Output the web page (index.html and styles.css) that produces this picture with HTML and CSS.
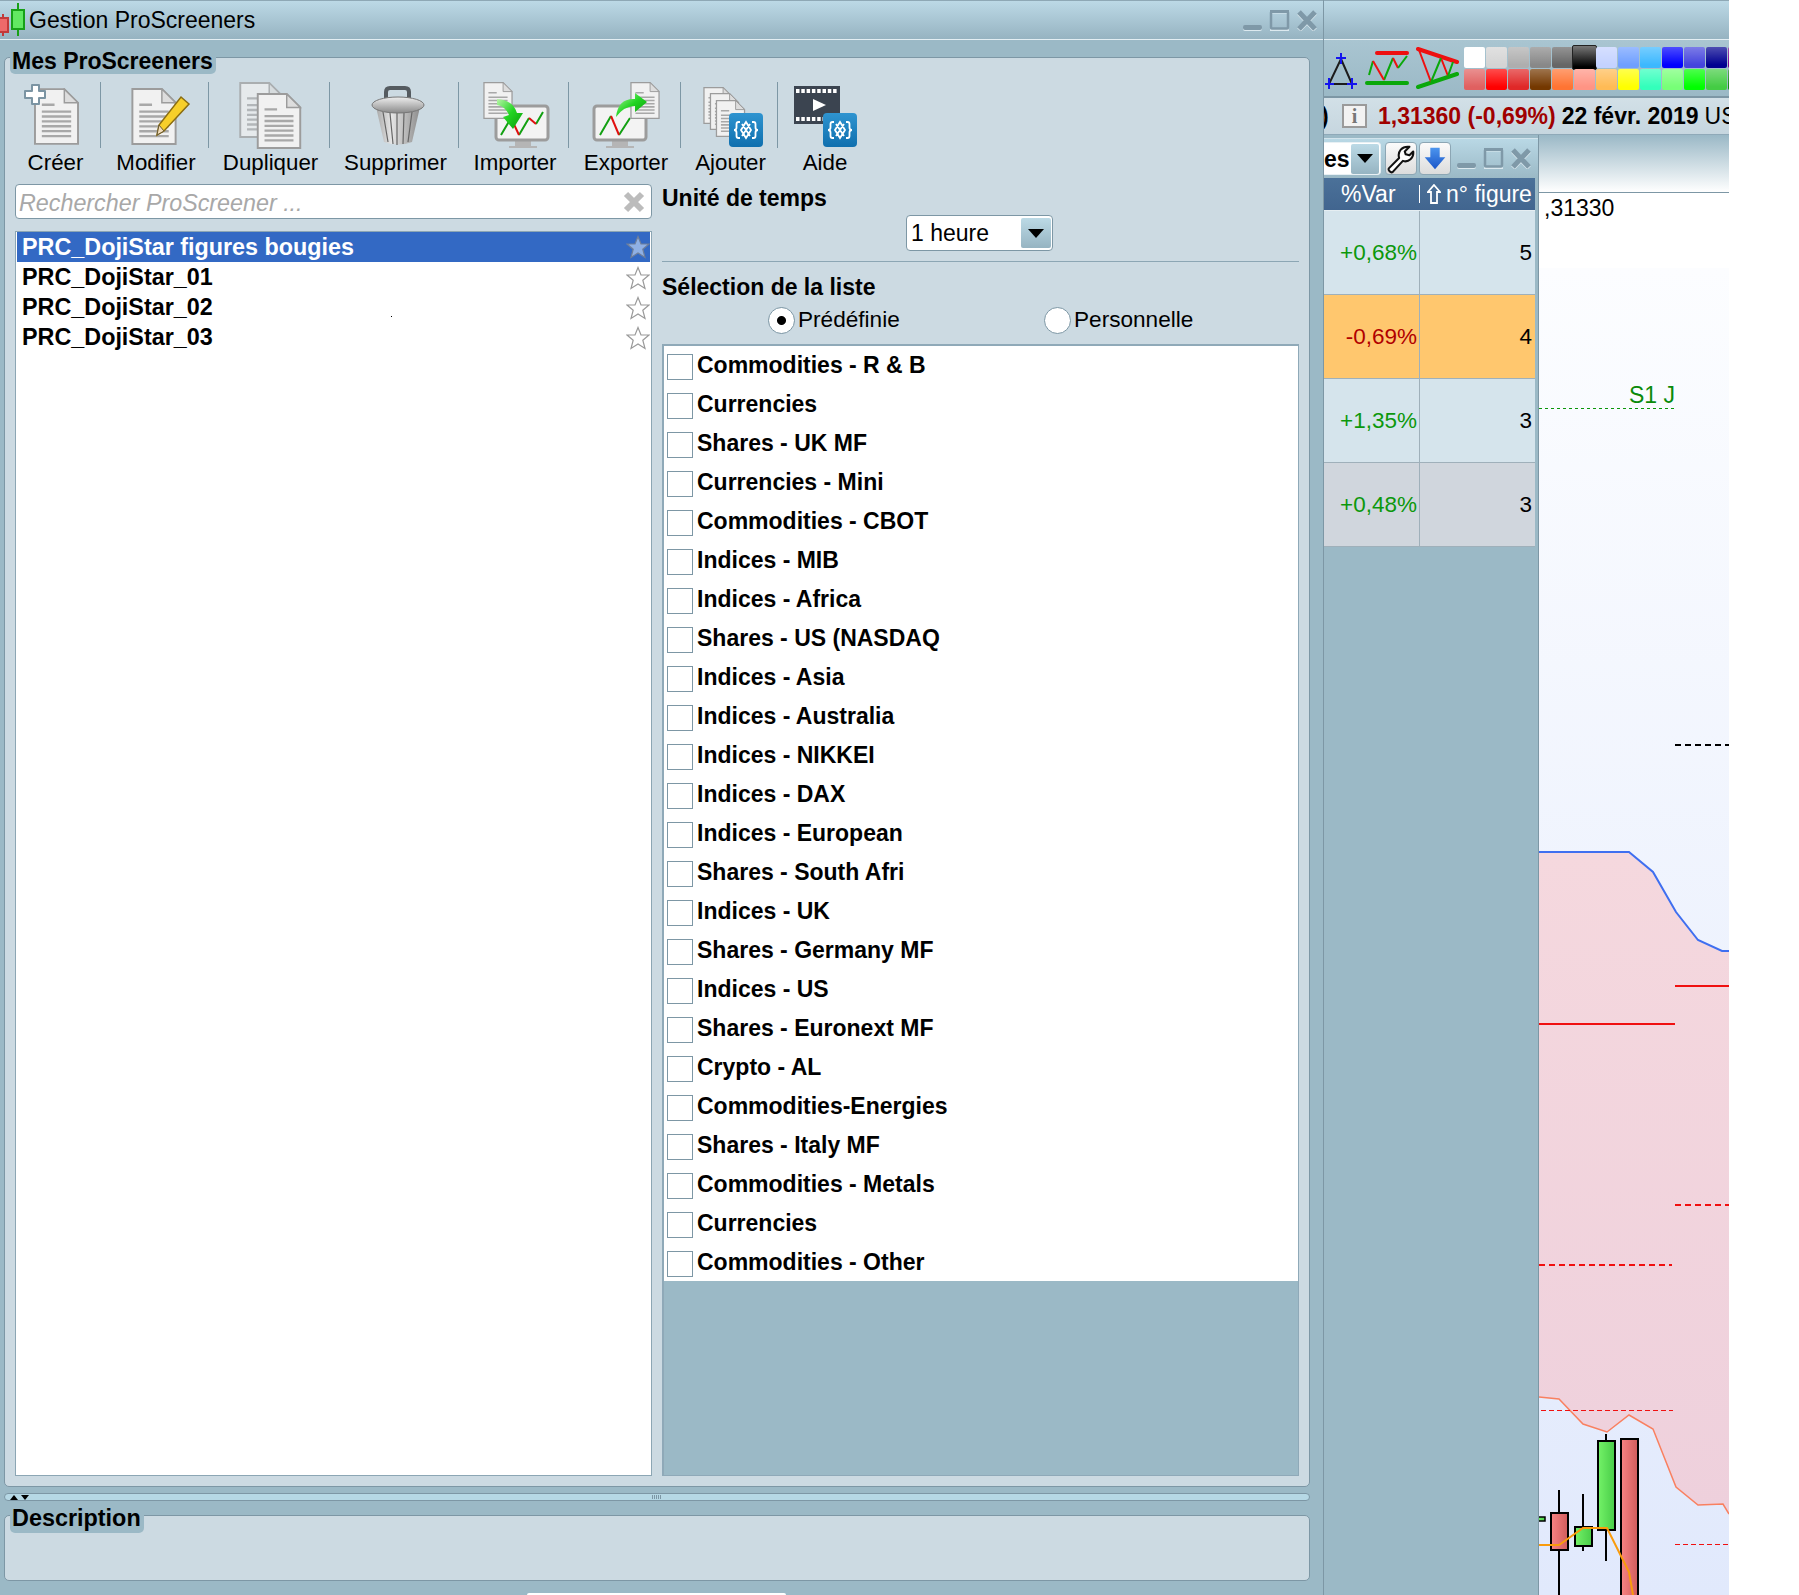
FILE: index.html
```html
<!DOCTYPE html>
<html lang="fr">
<head>
<meta charset="utf-8">
<title>Gestion ProScreeners</title>
<link rel="stylesheet" href="styles.css">
</head>
<body>
<svg class="defs" aria-hidden="true">
  <defs>
    <linearGradient id="badgeGrad" x1="0" y1="0" x2="0" y2="1"><stop offset="0" stop-color="#2f94d0"/><stop offset="1" stop-color="#0f6fae"/></linearGradient>
    <linearGradient id="arrowGrad" x1="0" y1="0" x2="1" y2="1"><stop offset="0" stop-color="#b8f5a8"/><stop offset=".5" stop-color="#22d422"/><stop offset="1" stop-color="#0a9a0a"/></linearGradient>
    <linearGradient id="metalGrad" x1="0" y1="0" x2="1" y2="0"><stop offset="0" stop-color="#a8a8a8"/><stop offset=".35" stop-color="#e6e6e6"/><stop offset="1" stop-color="#8c8c8c"/></linearGradient>
    <linearGradient id="lidGrad" x1="0" y1="0" x2="0" y2="1"><stop offset="0" stop-color="#eeeeee"/><stop offset="1" stop-color="#8a8a8a"/></linearGradient>
    <linearGradient id="blueDown" x1="0" y1="0" x2="0" y2="1"><stop offset="0" stop-color="#4c95ee"/><stop offset="1" stop-color="#1a55c8"/></linearGradient>
    <linearGradient id="chartBg" x1="0" y1="0" x2="0" y2="1"><stop offset="0" stop-color="#fcfdff"/><stop offset="1" stop-color="#e1e9fc"/></linearGradient>
    <linearGradient id="pinkBg" x1="0" y1="0" x2="0" y2="1"><stop offset="0" stop-color="#f5d8de"/><stop offset="1" stop-color="#eed0dc"/></linearGradient>
    <linearGradient id="redCandle" x1="0" y1="0" x2="1" y2="0"><stop offset="0" stop-color="#f88484"/><stop offset="1" stop-color="#d05c5c"/></linearGradient>
    <linearGradient id="greenCandle" x1="0" y1="0" x2="1" y2="0"><stop offset="0" stop-color="#74f268"/><stop offset="1" stop-color="#48cc48"/></linearGradient>
    <symbol id="doc" viewBox="0 0 46 58">
      <path d="M1 1h30l14 14v42H1z" fill="#f1f1f1" stroke="#9c9c9c" stroke-width="2"/>
      <path d="M31 1v14h14z" fill="#dddddd" stroke="#9c9c9c" stroke-width="1.5"/>
      <path d="M8 17h13M8 24h30M8 29h30M8 34h30M8 39h30M8 44h30M8 49h30" stroke="#a8a8a8" stroke-width="2.4"/>
    </symbol>
    <symbol id="badge" viewBox="0 0 34 34">
      <rect width="34" height="34" rx="4" fill="url(#badgeGrad)"/>
      <path d="M11 9H9.500Q7.500 9 7.500 11V14.500Q7.500 17 5 17Q7.500 17 7.500 19.500V23Q7.500 25 9.500 25H11M23 9H24.500Q26.500 9 26.500 11V14.500Q26.500 17 29 17Q26.500 17 26.500 19.500V23Q26.500 25 24.500 25H23M13 11L21 23M21 11L13 23M17 9L22 17L17 25L12 17Z" fill="none" stroke="#fff" stroke-width="1.800"/>
    </symbol>
    <symbol id="winctl" viewBox="0 0 75 21">
      <rect x="0" y="16" width="19" height="5" rx="2" fill="#dce9ef"/>
      <rect x="0" y="15" width="19" height="5" rx="2" fill="#7f99a8"/>
      <rect x="28" y="2.500" width="17" height="17.500" fill="none" stroke="#dce9ef" stroke-width="2"/>
      <rect x="28" y="1.500" width="17" height="17" rx="1" fill="none" stroke="#7f99a8" stroke-width="2.500"/>
      <path d="M27 1.500H46" stroke="#7f99a8" stroke-width="3"/>
      <path d="M56 3L72 20M72 3L56 20" stroke="#dce9ef" stroke-width="5"/>
      <path d="M56 2L72 19M72 2L56 19" stroke="#7f99a8" stroke-width="5"/>
    </symbol>
    <symbol id="star" viewBox="0 0 24 24">
      <path d="M12 1.500L15 9H23L16.800 14.200L19 22.500L12 18L5 22.500L7.200 14.200L1 9H9Z"/>
    </symbol>
  </defs>
</svg>

<div class="screen">
  <section class="dialog">
    <header class="titlebar">
      <svg class="app-icon" viewBox="0 0 28 39" width="28" height="39">
        <path d="M3 14V36" stroke="#c23a3a" stroke-width="2"/>
        <rect x="-3" y="18" width="11" height="14" fill="#ee6a6a" stroke="#c23a3a" stroke-width="2"/>
        <path d="M18 3V36" stroke="#17a017" stroke-width="2"/>
        <rect x="12" y="10" width="12" height="19" fill="#62e862" stroke="#17a017" stroke-width="2"/>
      </svg>
      <span class="title-text">Gestion ProScreeners</span>
      <svg class="winctl"><use href="#winctl"/></svg>
    </header>

    <div class="group main-group">
      <div class="legend">Mes ProScreeners</div>
      <div class="toolbar">
        <div class="tool">
          <svg class="tool-icon" viewBox="15 82 80 66"><use href="#doc" x="33" y="88" width="45" height="57"/><path d="M31 85h7v6h6v7h-6v6h-7v-6h-7v-7h7z" fill="#fff" stroke="#7b94a3" stroke-width="2" stroke-linejoin="round"/></svg>
          <span>Créer</span>
        </div>
        <i class="tool-sep"></i>
        <div class="tool">
          <svg class="tool-icon" viewBox="116 82 80 66"><use href="#doc" x="131" y="88" width="46" height="57"/><path d="M181 97L189 104L164 131L157 135L159 125Z" fill="#f7cf2a" stroke="#8a6d12" stroke-width="1.500"/><path d="M159 125L164 131L157 135Z" fill="#f2dcb8" stroke="#6a5a30"/></svg>
          <span>Modifier</span>
        </div>
        <i class="tool-sep"></i>
        <div class="tool">
          <svg class="tool-icon" viewBox="231 82 80 66"><use class="back-doc" href="#doc" x="239" y="82" width="45" height="56"/><use href="#doc" x="256" y="93" width="46" height="56"/></svg>
          <span>Dupliquer</span>
        </div>
        <i class="tool-sep"></i>
        <div class="tool">
          <svg class="tool-icon" viewBox="355 82 80 66"><path d="M385 100V92Q385 88 389 88H404Q408 88 408 92V100" fill="none" stroke="#555b60" stroke-width="4"/><path d="M375 107L383 142Q397 147 411 142L419 107Z" fill="url(#metalGrad)"/><path d="M382 112L387 142M389 113L392 144M396 113V145M403 113L402 144M411 112L407 142" stroke="#666" stroke-width="1.200"/><ellipse cx="397" cy="105" rx="26" ry="8" fill="url(#lidGrad)" stroke="#777"/></svg>
          <span>Supprimer</span>
        </div>
        <i class="tool-sep"></i>
        <div class="tool">
          <svg class="tool-icon" viewBox="475 82 80 66"><path d="M515 140h16v6h6v2h-28v-2h6z" fill="#b5b5b5"/><rect x="496" y="106" width="52" height="34" rx="3" fill="#f3f3f3" stroke="#9c9c9c" stroke-width="3"/><path d="M501 135L511 118M519 135L529 118M536 124L543 112" stroke="#12a012" stroke-width="2" fill="none"/><path d="M511 118L519 135M529 118L536 124" stroke="#e01010" stroke-width="2" fill="none"/><use href="#doc" x="482" y="82" width="32" height="37"/><path d="M497 99Q513 100 517 113H523L513 129L503 117L509 115Q505 106 497 105Z" fill="url(#arrowGrad)"/></svg>
          <span>Importer</span>
        </div>
        <i class="tool-sep"></i>
        <div class="tool">
          <svg class="tool-icon" viewBox="586 82 80 66"><path d="M612 140h16v6h6v2h-28v-2h6z" fill="#b5b5b5"/><rect x="594" y="106" width="52" height="34" rx="3" fill="#f3f3f3" stroke="#9c9c9c" stroke-width="3"/><path d="M600 135L611 116M619 135L630 118" stroke="#12a012" stroke-width="2" fill="none"/><path d="M611 116L619 135" stroke="#e01010" stroke-width="2" fill="none"/><use href="#doc" x="629" y="82" width="32" height="37"/><path d="M616 117Q618 98 635 99V93L647 102L635 112V106Q624 106 616 117Z" fill="url(#arrowGrad)"/></svg>
          <span>Exporter</span>
        </div>
        <i class="tool-sep"></i>
        <div class="tool">
          <svg class="tool-icon" viewBox="690 82 80 66"><use href="#doc" x="702" y="87" width="30" height="37"/><use href="#doc" x="708" y="93" width="31" height="37"/><use href="#doc" x="714" y="100" width="31" height="37"/><use href="#badge" x="728" y="113" width="34" height="34"/></svg>
          <span>Ajouter</span>
        </div>
        <i class="tool-sep"></i>
        <div class="tool">
          <svg class="tool-icon" viewBox="785 82 80 66"><rect x="794" y="86" width="46" height="38" fill="#3b4450"/><path d="M796 91H838M796 119H838" stroke="#fff" stroke-width="4" stroke-dasharray="3.500 1.800" fill="none"/><path d="M813 99L826 105L813 111Z" fill="#fff"/><use href="#badge" x="823" y="113" width="34" height="34"/></svg>
          <span>Aide</span>
        </div>
      </div>

      <div class="columns">
        <div class="left-col">
          <div class="search">
            <span class="search-text">Rechercher ProScreener ...</span>
            <svg class="search-clear" viewBox="0 0 22 22"><path d="M3 3L19 19M19 3L3 19" stroke="#bcbcbc" stroke-width="6"/></svg>
          </div>
          <div class="screeners">
            <div class="screener selected"><span>PRC_DojiStar figures bougies</span><svg class="star"><use href="#star"/></svg></div>
            <div class="screener"><span>PRC_DojiStar_01</span><svg class="star"><use href="#star"/></svg></div>
            <div class="screener"><span>PRC_DojiStar_02</span><svg class="star"><use href="#star"/></svg><i class="speck"></i></div>
            <div class="screener"><span>PRC_DojiStar_03</span><svg class="star"><use href="#star"/></svg></div>
          </div>
        </div>

        <div class="right-col">
          <div class="field-label first">Unité de temps</div>
          <div class="combo">
            <span>1 heure</span>
            <span class="combo-btn"><i class="caret"></i></span>
          </div>
          <div class="rule"></div>
          <div class="field-label second">Sélection de la liste</div>
          <div class="radios">
            <label class="radio checked">Prédéfinie</label>
            <label class="radio">Personnelle</label>
          </div>
          <div class="list-panel">
            <ul class="checks">
              <li>Commodities - R &amp; B</li>
              <li>Currencies</li>
              <li>Shares - UK MF</li>
              <li>Currencies - Mini</li>
              <li>Commodities - CBOT</li>
              <li>Indices - MIB</li>
              <li>Indices - Africa</li>
              <li>Shares - US (NASDAQ</li>
              <li>Indices - Asia</li>
              <li>Indices - Australia</li>
              <li>Indices - NIKKEI</li>
              <li>Indices - DAX</li>
              <li>Indices - European</li>
              <li>Shares - South Afri</li>
              <li>Indices - UK</li>
              <li>Shares - Germany MF</li>
              <li>Indices - US</li>
              <li>Shares - Euronext MF</li>
              <li>Crypto - AL</li>
              <li>Commodities-Energies</li>
              <li>Shares - Italy MF</li>
              <li>Commodities - Metals</li>
              <li>Currencies</li>
              <li>Commodities - Other</li>
            </ul>
          </div>
        </div>
      </div>
    </div>

    <div class="splitter">
      <i class="split-up"></i><i class="split-down"></i>
      <i class="grip"></i>
    </div>

    <div class="group desc-group">
      <div class="legend desc-legend">Description</div>
    </div>
    <div class="bottom-tab"></div>
  </section>

  <section class="app">
    <div class="titlebar app-title"></div>
    <div class="draw-tools">
      <svg class="draw-icons" viewBox="1324 41 135 54" width="135" height="54">
        <path d="M1341 59L1329 84H1352Z" fill="none" stroke="#1c1c1c" stroke-width="2"/>
        <path d="M1341 53V64M1336 58H1346M1329 78V89M1325 84H1334M1352 78V89M1347 84H1357" stroke="#1414ee" stroke-width="2"/>
        <path d="M1377 53H1407" stroke="#ee1010" stroke-width="4" stroke-linecap="round"/>
        <path d="M1367 83H1407" stroke="#0aa80a" stroke-width="4" stroke-linecap="round"/>
        <path d="M1369 75L1373 61M1384 80L1393 58" stroke="#0aa80a" stroke-width="2" fill="none"/>
        <path d="M1373 61L1384 80M1393 58L1398 68" stroke="#ee1010" stroke-width="2" fill="none"/>
        <path d="M1398 68L1407 56" stroke="#0aa80a" stroke-width="2" fill="none"/>
        <path d="M1418 49L1457 62" stroke="#ee1010" stroke-width="4" stroke-linecap="round"/>
        <path d="M1418 87L1457 74" stroke="#0aa80a" stroke-width="4" stroke-linecap="round"/>
        <path d="M1419 50L1431 82M1441 58L1448 76" stroke="#ee1010" stroke-width="2" fill="none"/>
        <path d="M1431 82L1441 58M1448 76L1453 62" stroke="#0aa80a" stroke-width="2" fill="none"/>
      </svg>
      <div class="swatches">
        <i class="sw s1"></i><i class="sw s2"></i><i class="sw s3"></i><i class="sw s4"></i><i class="sw s5"></i><i class="sw s6"></i><i class="sw s7"></i><i class="sw s8"></i><i class="sw s9"></i><i class="sw s10"></i><i class="sw s11"></i><i class="sw s12"></i><i class="sw s13"></i>
        <i class="sw t1"></i><i class="sw t2"></i><i class="sw t3"></i><i class="sw t4"></i><i class="sw t5"></i><i class="sw t6"></i><i class="sw t7"></i><i class="sw t8"></i><i class="sw t9"></i><i class="sw t10"></i><i class="sw t11"></i><i class="sw t12"></i><i class="sw t13"></i>
      </div>
    </div>
    <div class="infobar">
      <span class="info-cut">)</span>
      <span class="info-icon">i</span>
      <span class="price">1,31360 (-0,69%)</span>
      <span class="date">22 févr. 2019</span>
      <span class="cur">US</span>
    </div>
    <div class="lower">
      <div class="widget">
        <div class="widget-head">
          <div class="w-combo"><span>es</span><span class="combo-btn w-btn"><i class="caret"></i></span></div>
          <button class="w-tool">
            <svg viewBox="0 0 32 32" width="30" height="30"><path d="M3 26L14 15C12 8 17 2 25 3L20 8L21 11L25 12L29 8C30 15 24 20 18 18L7 30C5 31 2 28 3 26Z" fill="#fff" stroke="#111" stroke-width="2.200" stroke-linejoin="round"/></svg>
          </button>
          <button class="w-tool">
            <svg viewBox="0 0 32 32" width="30" height="30"><path d="M11 4H21V14H27L16 27L5 14H11Z" fill="url(#blueDown)"/></svg>
          </button>
          <svg class="winctl w-ctl"><use href="#winctl"/></svg>
        </div>
        <div class="vtable">
          <div class="vhead">
            <span class="vh-var">%Var</span>
            <span class="vh-fig"><svg viewBox="0 0 14 20" width="14" height="20"><path d="M7 1L13 8H10V19H4V8H1Z" fill="none" stroke="#fff" stroke-width="1.800"/></svg>n° figure</span>
          </div>
          <div class="vrow"><span class="up">+0,68%</span><span>5</span></div>
          <div class="vrow active"><span class="down">-0,69%</span><span>4</span></div>
          <div class="vrow"><span class="up">+1,35%</span><span>3</span></div>
          <div class="vrow muted"><span class="up">+0,48%</span><span>3</span></div>
        </div>
      </div>
      <div class="chart">
        <div class="chart-head"></div>
        <svg class="chart-svg" viewBox="1539 193 190 1402" width="190" height="1402">
          <rect x="1539" y="268" width="190" height="1327" fill="url(#chartBg)"/>
          <path d="M1539 852H1629L1653 872L1676 912L1698 940L1722 951H1729V1514L1723 1504L1698 1505L1676 1487L1653 1429L1629 1415L1607 1432L1583 1424L1559 1399L1539 1397Z" fill="url(#pinkBg)"/>
          <path d="M1539 852H1629L1653 872L1676 912L1698 940L1722 951H1729" fill="none" stroke="#3f6ff0" stroke-width="2"/>
          <path d="M1539 1397L1559 1399L1583 1424L1607 1432L1629 1415L1653 1429L1676 1487L1698 1505L1723 1504L1729 1514" fill="none" stroke="#f98060" stroke-width="1.500"/>
          <text class="chart-text" x="1544" y="216">,31330</text>
          <text class="chart-text s1" x="1629" y="403">S1 J</text>
          <g class="crisp">
            <path d="M1539 408.500H1675" stroke="#0a960a" stroke-dasharray="3 3"/>
            <path d="M1675 745H1729" stroke="#000" stroke-width="2" stroke-dasharray="6 4"/>
            <path d="M1539 1024H1675M1675 986H1729" stroke="#f01010" stroke-width="2"/>
            <path d="M1539 1265H1672M1675 1205H1729" stroke="#f01010" stroke-width="2" stroke-dasharray="6 4"/>
            <path d="M1541 1410.500H1673M1675 1544.500H1729" stroke="#f01010" stroke-dasharray="5 3"/>
            <path d="M1559 1490V1595M1583 1494V1551M1606 1434V1561" stroke="#000" stroke-width="2"/>
          </g>
          <rect x="1538" y="1517" width="7" height="4" fill="url(#greenCandle)" stroke="#000" stroke-width="1.500"/>
          <rect x="1551" y="1513" width="17" height="37" fill="url(#redCandle)" stroke="#000" stroke-width="2"/>
          <rect x="1575" y="1527" width="17" height="19" fill="url(#greenCandle)" stroke="#000" stroke-width="2"/>
          <rect x="1598" y="1441" width="17" height="89" fill="url(#greenCandle)" stroke="#000" stroke-width="2"/>
          <rect x="1621" y="1439" width="17" height="170" fill="url(#redCandle)" stroke="#000" stroke-width="2"/>
          <path d="M1539 1545H1559L1583 1528H1607L1629 1572L1633 1595" fill="none" stroke="#f99b0c" stroke-width="2"/>
        </svg>
      </div>
    </div>
  </section>
</div>
</body>
</html>
```

FILE: styles.css
```css
* { box-sizing: border-box; }
html, body { margin: 0; padding: 0; }
body {
  width: 1799px;
  height: 1595px;
  overflow: hidden;
  background: #fff;
  color: #000;
  font: 23px/26px "Liberation Sans", Arial, sans-serif;
}
.defs { position: absolute; width: 0; height: 0; }
.screen { display: flex; width: 1729px; height: 1595px; overflow: hidden; }

/* Dialog */
.dialog {
  width: 1324px;
  height: 1595px;
  flex: none;
  display: flex;
  flex-direction: column;
  background: #9bb9c6;
  border-right: 1px solid #7d97a5;
}
.titlebar {
  height: 40px;
  flex: none;
  display: flex;
  align-items: center;
  background: linear-gradient(#bcd9e6, #96b3c1);
  border-top: 1px solid #8ea8b5;
  border-bottom: 1px solid #e3eef3;
}
.app-icon { flex: none; margin-top: -1px; }
.title-text { margin-left: 1px; }
.winctl { width: 75px; height: 21px; margin-left: auto; margin-right: 5px; flex: none; }
.group {
  background: #ccdae2;
  border: 1px solid #7d97a5;
  border-radius: 5px;
  margin-left: 4px;
  width: 1306px;
}
.main-group {
  flex: 1;
  min-height: 0;
  margin-top: 17px;
  display: flex;
  flex-direction: column;
  padding-bottom: 10px;
}
.legend {
  width: fit-content;
  height: 26px;
  margin: -10px 0 0 5px;
  padding: 0 3px 0 2px;
  background: #9bb9c6;
  border-radius: 0 0 5px 5px;
  font-weight: 700;
}
.toolbar {
  display: grid;
  grid-template-columns: 86px 1px 107px 1px 120px 1px 128px 1px 109px 1px 111px 1px 96px 1px 94px;
  align-items: start;
  margin: 8px 0 0 9px;
  height: 94px;
  width: fit-content;
  flex: none;
  font-size: 22.3px;
}
.tool {
  display: flex;
  flex-direction: column;
  align-items: center;
  padding-left: 3px;
}
.tool:first-child { padding: 0 3px 0 0; }
.tool:last-child { padding: 0; }
.tool-icon { width: 80px; height: 66px; margin: 0 -20px 2px; display: block; overflow: visible; }
.back-doc { opacity: .7; }
.tool-sep { width: 1px; height: 66px; background: #7d97a5; }

.columns {
  flex: 1;
  min-height: 0;
  display: flex;
  gap: 10px;
  margin: 8px 0 0 10px;
}
.left-col, .right-col { width: 637px; display: flex; flex-direction: column; }
.search {
  height: 35px;
  flex: none;
  display: flex;
  align-items: center;
  justify-content: space-between;
  background: #fff;
  border: 1px solid #7d97a5;
  border-radius: 4px;
  padding: 2px 6px 0 3px;
}
.search-text { font-style: italic; font-size: 23.3px; color: #a8a8a8; }
.search-clear { width: 22px; height: 22px; flex: none; margin-top: -2px; }
.screeners {
  flex: 1;
  margin-top: 12px;
  background: #fff;
  border: 1px solid #8ca6b4;
  padding: 0 1px;
}
.screener {
  height: 30px;
  position: relative;
  display: flex;
  align-items: center;
  justify-content: space-between;
  padding-left: 5px;
  font-weight: 700;
  font-size: 23.35px;
}
.screener.selected { background: #3369c4; color: #fff; }
.star {
  width: 24px;
  height: 24px;
  flex: none;
  margin-top: 2px;
  fill: #fff;
  stroke: #9a9a9a;
  stroke-width: 1.2;
}
.selected .star { fill: #8fb0e4; stroke: #6f7f9a; margin-top: 0; }
.speck { position: absolute; left: 374px; top: 24px; width: 1px; height: 1px; background: #000; }

.field-label { font-weight: 700; }
.field-label.first { margin-top: 1px; }
.field-label.second { margin-top: 12px; }
.combo {
  width: 147px;
  height: 36px;
  margin: 4px 0 0 244px;
  display: flex;
  align-items: center;
  justify-content: space-between;
  background: #fff;
  border: 1px solid #7d97a5;
  border-radius: 4px;
  padding: 0 1px 0 4px;
  flex: none;
}
.combo-btn {
  width: 30px;
  height: 30px;
  display: flex;
  align-items: center;
  justify-content: center;
  background: linear-gradient(#bcdae6, #96b4c2);
  border-radius: 2px;
}
.caret {
  width: 0;
  height: 0;
  border-left: 8px solid transparent;
  border-right: 8px solid transparent;
  border-top: 9px solid #000;
}
.rule { height: 1px; margin-top: 10px; background: #8ca6b4; flex: none; }
.radios { display: flex; margin: 7px 0 0 106px; height: 26px; flex: none; font-size: 22.6px; }
.radio {
  width: 276px;
  flex: none;
  display: flex;
  align-items: center;
  gap: 3px;
}
.radio::before {
  content: "";
  width: 25px;
  height: 25px;
  border-radius: 50%;
  background: #fff;
  border: 1px solid #7d97a5;
  flex: none;
}
.radio.checked::before { background: radial-gradient(circle, #000 0 4px, #fff 5px); }
.list-panel {
  flex: 1;
  min-height: 0;
  margin-top: 11px;
  background: #9bb9c6;
  border: 2px solid #8fa9b8;
  border-bottom-width: 1px;
  border-right-width: 1px;
  overflow: hidden;
}
.checks { list-style: none; margin: -1px 0 0; padding: 0; background: #fff; }
.checks li {
  height: 39px;
  display: flex;
  align-items: center;
  padding-left: 3px;
  gap: 4px;
  line-height: 36px;
  font-weight: 700;
}
.checks li::before {
  content: "";
  width: 24px;
  height: 24px;
  margin-top: 4px;
  flex: none;
  border: 1px solid #7d97a5;
  background: #fff;
}

.splitter {
  height: 8px;
  width: 1306px;
  margin: 6px 0 0 4px;
  flex: none;
  position: relative;
  display: flex;
  align-items: center;
  gap: 3px;
  padding-left: 5px;
  background: #b6d8e5;
  border: 1px solid #7d97a5;
  border-radius: 4px;
}
.split-up, .split-down { width: 0; height: 0; border-left: 4px solid transparent; border-right: 4px solid transparent; }
.split-up { border-bottom: 5px solid #000; }
.split-down { border-top: 5px solid #000; }
.grip {
  position: absolute;
  left: 647px;
  top: 1px;
  width: 9px;
  height: 4px;
  background: repeating-linear-gradient(90deg, #7d97a5 0 1px, transparent 1px 2px);
}
.desc-group { height: 66px; flex: none; margin-top: 14px; }
.desc-legend { margin: -8px 0 0 5px; height: 25px; line-height: 20px; font-size: 23.4px; }
.bottom-tab {
  width: 259px;
  height: 2px;
  margin: 12px 0 0 527px;
  background: #fff;
  border-radius: 3px 3px 0 0;
  flex: none;
}

/* Application behind */
.app { flex: 1; min-width: 0; display: flex; flex-direction: column; height: 1595px; }
.draw-tools {
  height: 58px;
  flex: none;
  display: flex;
  align-items: flex-start;
  overflow: hidden;
  background: linear-gradient(#a9c5d1, #9bb9c6);
  border-bottom: 2px solid #7d97a5;
}
.draw-icons { flex: none; margin-top: 1px; }
.swatches {
  display: grid;
  grid-template-columns: repeat(13, 21px);
  grid-auto-rows: 21px;
  gap: 1px;
  margin: 7px 0 0 5px;
  flex: none;
}
.sw { display: block; border-radius: 2px; background-image: linear-gradient(rgba(255,255,255,.3), rgba(255,255,255,0) 85%); }
.s1 { background-color: #fff; }
.s2 { background-color: #d4d4d4; }
.s3 { background-color: #aeaeae; }
.s4 { background-color: #888; }
.s5 { background-color: #666; }
.s6 { background-color: #000; margin: -2px; border: 1px solid #222; background-image: linear-gradient(#777, #000 90%); }
.s7 { background-color: #c4d2ff; }
.s8 { background-color: #6f9fff; }
.s9 { background-color: #3cb8ff; }
.s10 { background-color: #0000ff; }
.s11 { background-color: #4444dd; }
.s12 { background-color: #000090; }
.s13 { background-color: #7a0090; }
.t1 { background-color: #e06060; }
.t2 { background-color: #ff0000; }
.t3 { background-color: #e02828; }
.t4 { background-color: #743800; }
.t5 { background-color: #ff7433; }
.t6 { background-color: #ff9484; }
.t7 { background-color: #ffbb55; }
.t8 { background-color: #ffff00; }
.t9 { background-color: #33ffbb; }
.t10 { background-color: #77ff77; }
.t11 { background-color: #00ff00; }
.t12 { background-color: #44cc44; }
.t13 { background-color: #128a12; }
.infobar {
  height: 37px;
  flex: none;
  display: flex;
  align-items: center;
  white-space: nowrap;
  overflow: hidden;
  background: linear-gradient(#d2e0e7, #c6d6df);
  border-bottom: 1px solid #8fa9b8;
}
.info-cut { font-weight: 700; width: 18px; flex: none; margin-left: -3px; }
.info-icon {
  width: 25px;
  height: 24px;
  flex: none;
  display: flex;
  align-items: center;
  justify-content: center;
  margin-left: 3px;
  border: 2px solid #9a9a9a;
  background: #f2f2f2;
  color: #777;
  font: 700 20px/20px "Liberation Serif", serif;
}
.price { margin-left: 11px; font-weight: 700; color: #a00000; }
.date { margin-left: 6px; font-weight: 700; }
.cur { margin-left: 6px; }
.lower { flex: 1; min-height: 0; display: flex; }
.widget {
  width: 215px;
  flex: none;
  background: #9bb9c6;
  border-right: 1px solid #7d97a5;
  padding-top: 3px;
}
.widget-head {
  height: 40px;
  display: flex;
  align-items: center;
  background: linear-gradient(#b9d8e5, #9bb9c6);
  border-top: 1px solid #d3e4ec;
}
.w-combo {
  width: 57px;
  height: 33px;
  flex: none;
  display: flex;
  align-items: center;
  justify-content: space-between;
  background: #fff;
  border: 1px solid #e8f0f4;
  border-left: 0;
  border-radius: 0 4px 4px 0;
  padding-right: 1px;
  font-weight: 700;
}
.w-btn { height: 30px; margin-left: 1px; }
.w-tool {
  width: 32px;
  height: 33px;
  flex: none;
  margin: 0 0 0 2px;
  padding: 0;
  display: flex;
  align-items: center;
  justify-content: center;
  background: linear-gradient(#fbfbfb, #dcdcdc);
  border: 1px solid #8ca6b4;
  border-radius: 4px;
}
.w-combo + .w-tool { margin-left: 4px; }
.w-ctl { margin-right: 6px; }
.vtable { width: 211px; }
.vhead {
  height: 33px;
  display: grid;
  grid-template-columns: 95px 1fr;
  align-items: center;
  color: #fff;
  white-space: nowrap;
  background: linear-gradient(#4b7199, #41658f);
  border-bottom: 1px solid #e6eef2;
}
.vh-var { padding-left: 17px; }
.vh-fig { display: flex; align-items: center; gap: 5px; padding-left: 7px; border-left: 1px solid #fff; height: 18px; }
.vh-fig svg { flex: none; }
.vrow {
  height: 84px;
  display: grid;
  grid-template-columns: 95px 1fr;
  align-items: stretch;
  text-align: right;
  line-height: 83px;
  font-size: 22.5px;
  background: #d5e4ec;
  border-bottom: 1px solid #9fb0ba;
}
.vrow span { padding-right: 2px; }
.vrow span + span { border-left: 1px solid #9fb0ba; padding-right: 3px; }
.vrow.active { background: #ffc76e; }
.vrow.muted { background: #d0d6dd; }
.up { color: #0c980c; }
.down { color: #b00000; }
.chart { flex: 1; min-width: 0; background: #fff; }
.chart-head {
  height: 58px;
  background: linear-gradient(#9ab8c6, #fff);
  border-bottom: 1px solid #7d97a5;
}
.chart-svg { display: block; }
.chart-text { font: 23px "Liberation Sans", Arial, sans-serif; fill: #000; }
.chart-text.s1 { fill: #0a8a0a; }
.crisp { shape-rendering: crispEdges; fill: none; }
```
